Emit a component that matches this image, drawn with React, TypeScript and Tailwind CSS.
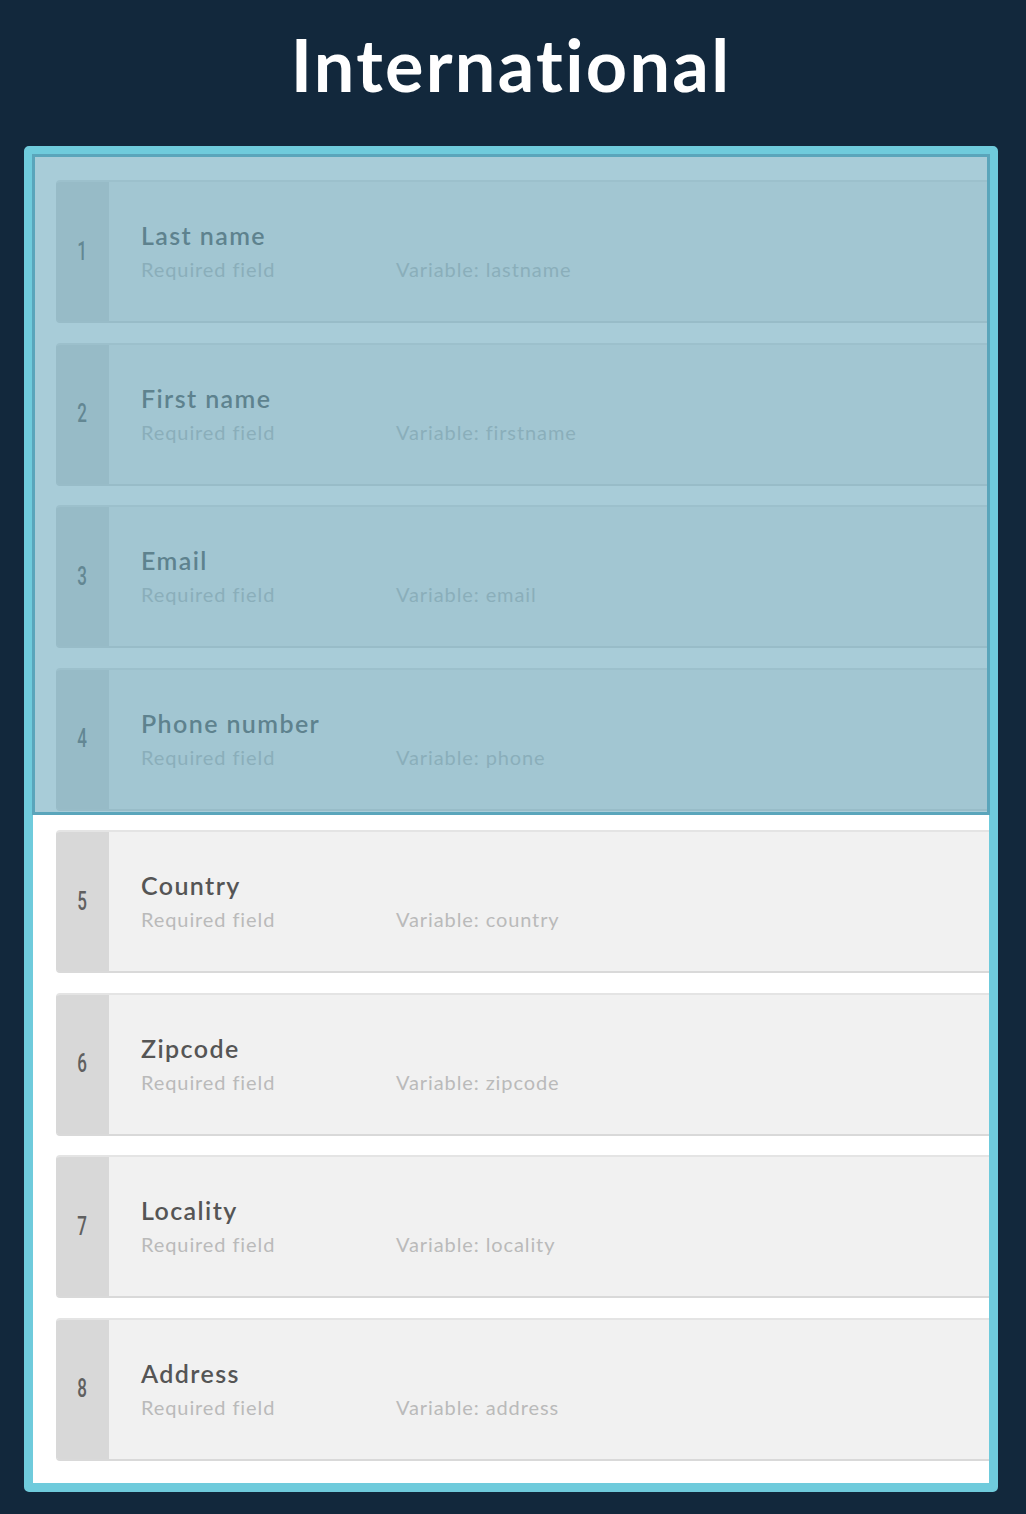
import React from "react";

type Field = { n: number; label: string; variable: string };

const fields: Field[] = [
  { n: 1, label: "Last name", variable: "lastname" },
  { n: 2, label: "First name", variable: "firstname" },
  { n: 3, label: "Email", variable: "email" },
  { n: 4, label: "Phone number", variable: "phone" },
  { n: 5, label: "Country", variable: "country" },
  { n: 6, label: "Zipcode", variable: "zipcode" },
  { n: 7, label: "Locality", variable: "locality" },
  { n: 8, label: "Address", variable: "address" },
];

function FieldRow({ f }: { f: Field }) {
  return (
    <div className="flex h-[143px] shrink-0 rounded-l-[4px] overflow-hidden border-t-2 border-b-2 border-t-[#e4e4e4] border-b-[#d9d9d9] bg-[#f1f1f1]">
      <div className="w-[53px] shrink-0 bg-[#d8d8d8] flex items-center justify-center">
        <span className="font-['Roboto',sans-serif] font-medium text-[25px] text-[#606060] scale-x-[0.68] inline-block">
          {f.n}
        </span>
      </div>
      <div className="flex-1 pl-[32px] pt-[38px]">
        <div className="text-[25px] leading-[30px] font-semibold tracking-[1.4px] text-[#555]">{f.label}</div>
        <div className="flex mt-[6px] text-[20px] leading-[26px] tracking-[0.9px] text-[#bababa]">
          <span className="w-[255px]">Required field</span>
          <span>Variable: {f.variable}</span>
        </div>
      </div>
    </div>
  );
}

export default function App() {
  return (
    <div className="min-h-[1514px] bg-[#12283c] font-['Lato',sans-serif] flex flex-col items-center pr-[4px]">
      <h1 className="h-[146px] pt-[26px] text-[72px] leading-[76px] font-bold tracking-[2.3px] text-white">
        International
      </h1>
      <div className="relative w-[974px] rounded-[5px] border-[9px] border-[#6fcbdc] bg-white">
        <div className="flex flex-col gap-[19.5px] pl-[23px] pt-[25px] pb-[22px] overflow-hidden">
          {fields.map((f) => (
            <FieldRow key={f.n} f={f} />
          ))}
        </div>
        {/* selection overlay over the first four fields */}
        <div className="absolute left-[-1px] top-[-1px] w-[958px] h-[661px] border-[3px] border-[#5aa5bb] bg-[rgba(102,166,187,0.57)] pointer-events-none" />
      </div>
    </div>
  );
}
